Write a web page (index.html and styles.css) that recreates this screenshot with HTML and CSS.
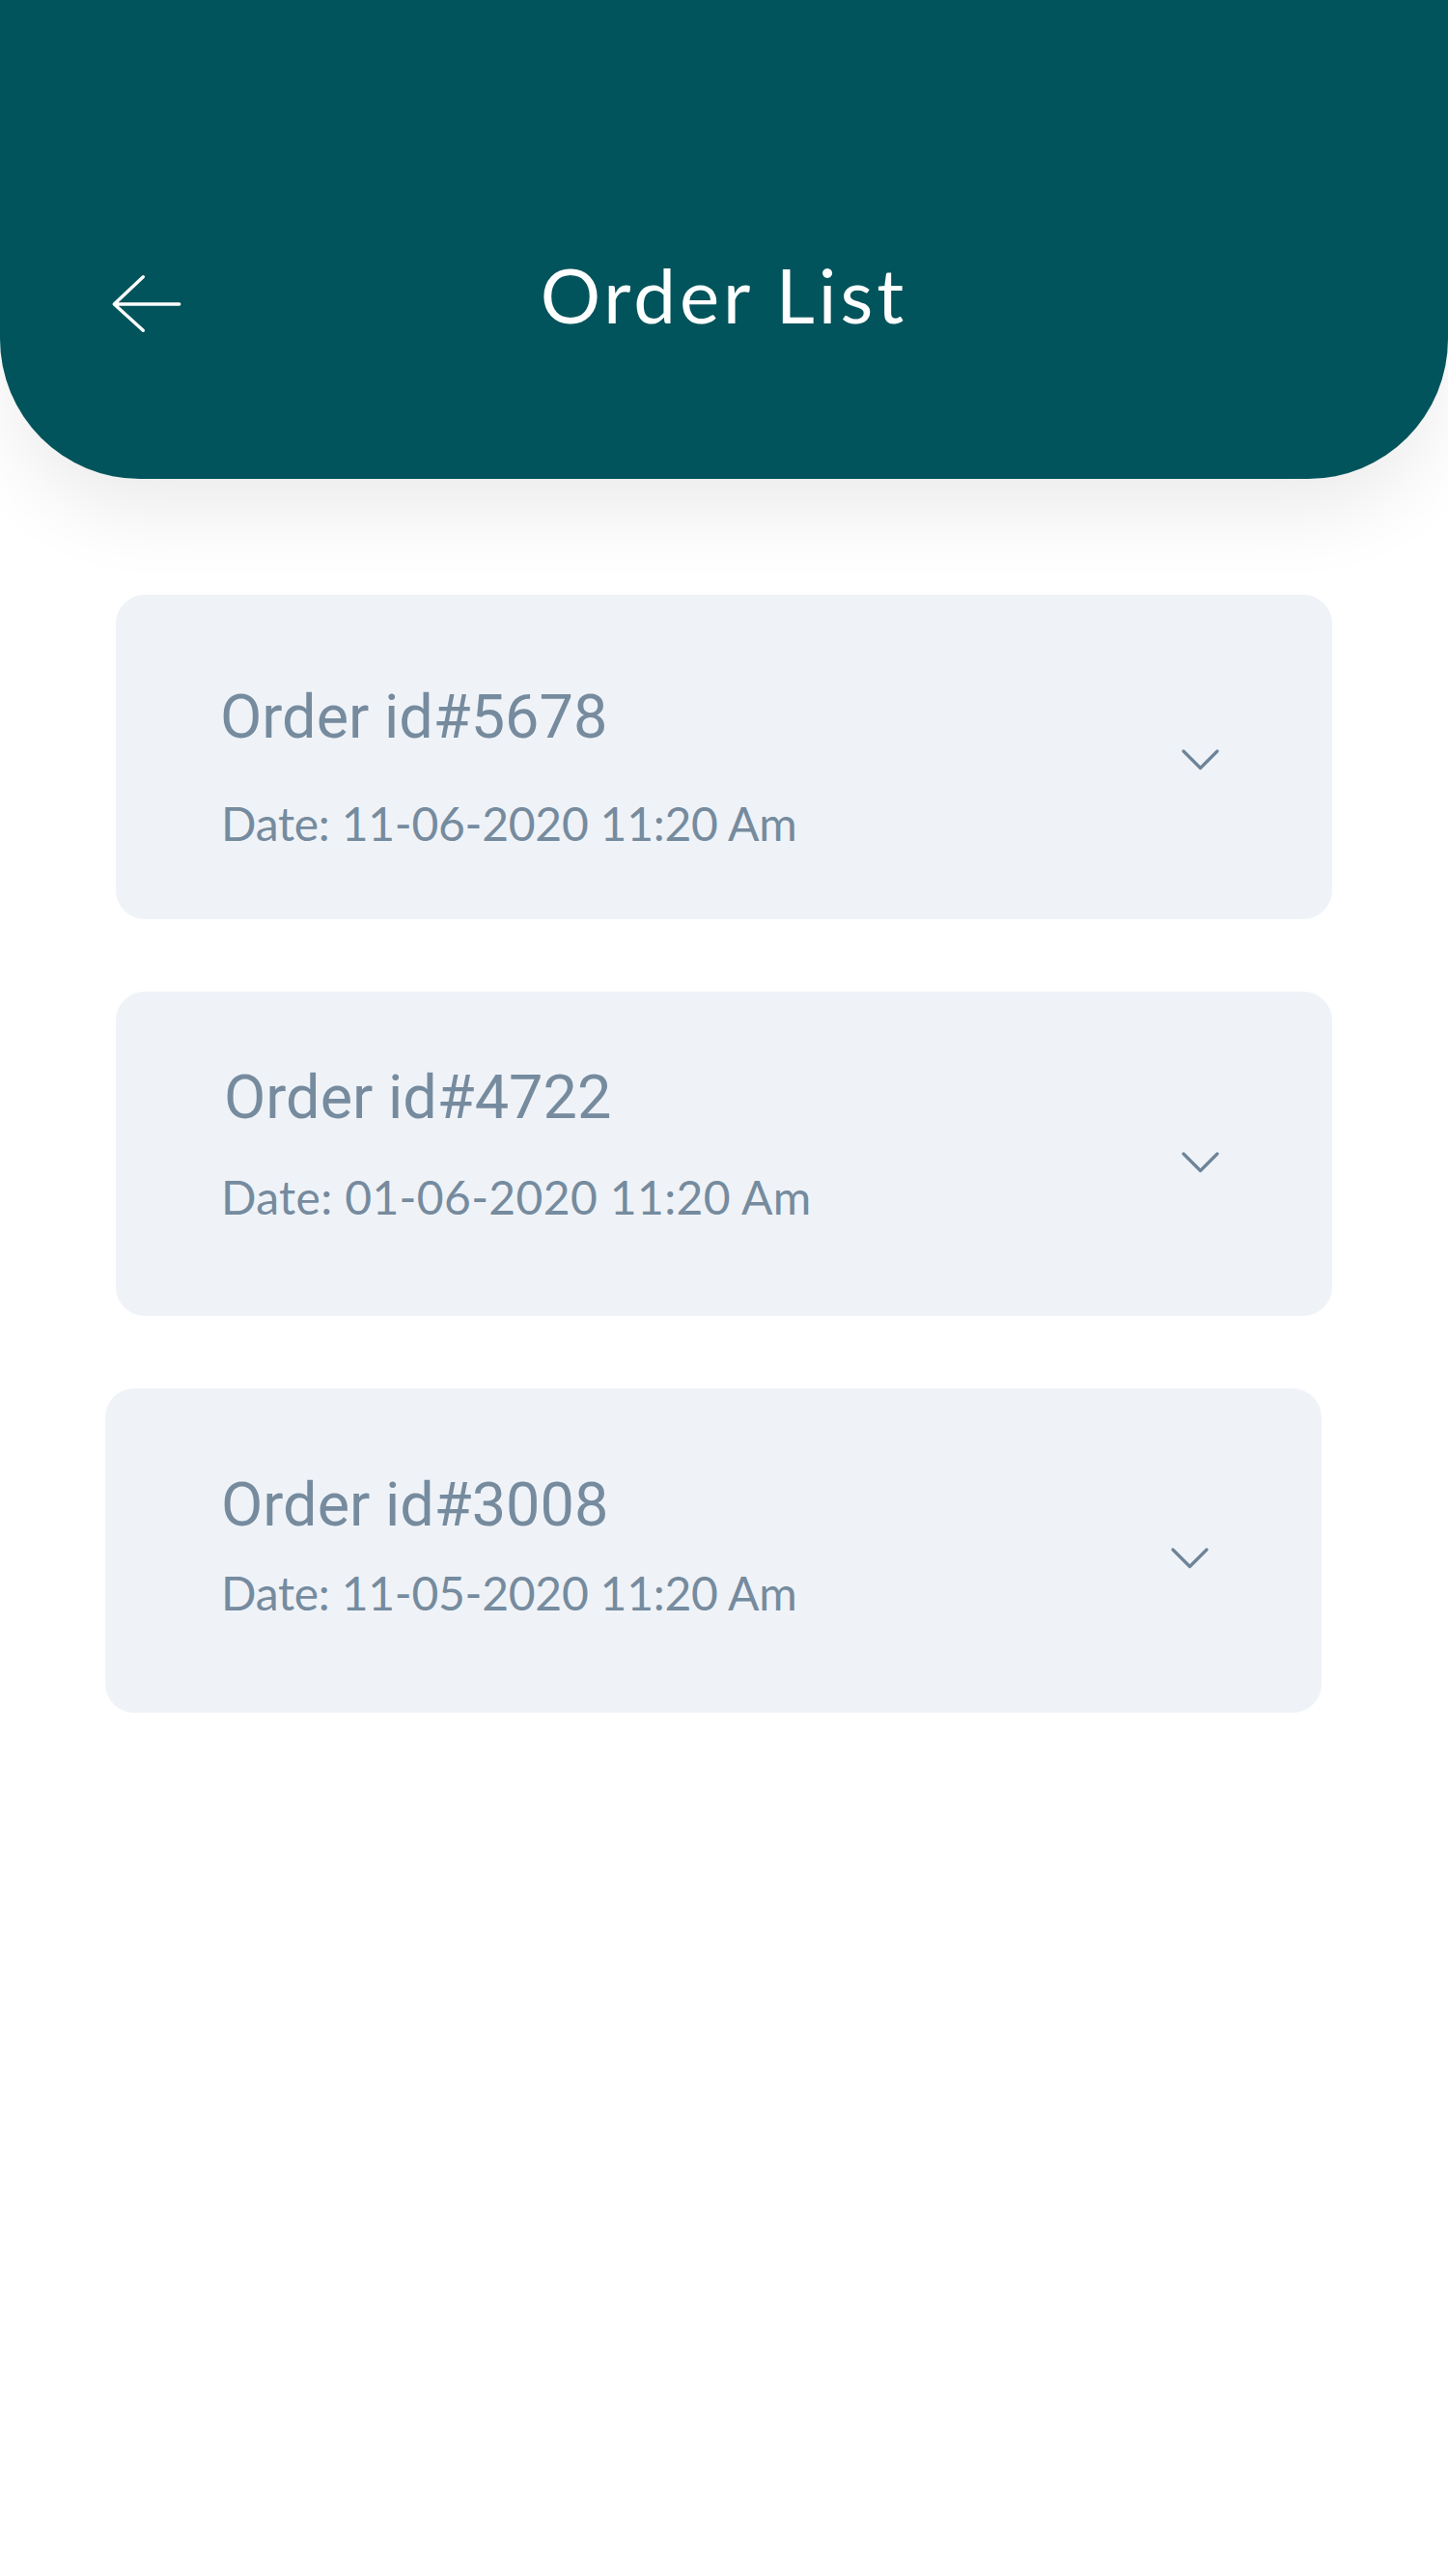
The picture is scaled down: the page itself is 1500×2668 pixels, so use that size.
FILE: index.html
```html
<!DOCTYPE html>
<html lang="en">
<head>
<meta charset="utf-8">
<title>Order List</title>
<link rel="stylesheet" href="styles.css">
</head>
<body>
  <header class="topbar">
    <div class="topbar-row">
      <button class="back" aria-label="Back">
        <svg class="back-icon" width="100" height="90" viewBox="0 0 100 90">
          <path d="M48.3 16.7 L18.3 45 L48.3 72.3 M18.3 45 L85.7 45" fill="none" stroke="#ffffff" stroke-width="3.4" stroke-linecap="round" stroke-linejoin="round"/>
        </svg>
      </button>
      <h1 class="title">Order List</h1>
      <div class="spacer"></div>
    </div>
  </header>

  <main class="orders">
    <section class="card card-a">
      <div class="card-text">
        <div class="order-id">Order id#5678</div>
        <div class="order-date">Date: 11-06-2020 11:20 Am</div>
      </div>
      <svg class="chevron" width="39" height="22" viewBox="0 0 39 22">
        <path d="M2 2 L19.5 19.5 L37 2" fill="none" stroke="#6e8498" stroke-width="3.2" stroke-linecap="round" stroke-linejoin="round"/>
      </svg>
    </section>

    <section class="card card-b">
      <div class="card-text">
        <div class="order-id">Order id#4722</div>
        <div class="order-date">Date: 01-06-2020 11:20 Am</div>
      </div>
      <svg class="chevron" width="39" height="22" viewBox="0 0 39 22">
        <path d="M2 2 L19.5 19.5 L37 2" fill="none" stroke="#6e8498" stroke-width="3.2" stroke-linecap="round" stroke-linejoin="round"/>
      </svg>
    </section>

    <section class="card card-c">
      <div class="card-text">
        <div class="order-id">Order id#3008</div>
        <div class="order-date">Date: 11-05-2020 11:20 Am</div>
      </div>
      <svg class="chevron" width="39" height="22" viewBox="0 0 39 22">
        <path d="M2 2 L19.5 19.5 L37 2" fill="none" stroke="#6e8498" stroke-width="3.2" stroke-linecap="round" stroke-linejoin="round"/>
      </svg>
    </section>
  </main>
</body>
</html>
```

FILE: styles.css
```css
* {
  box-sizing: border-box;
}

html, body {
  margin: 0;
  padding: 0;
  background: #ffffff;
}

body {
  width: 1500px;
  min-height: 2668px;
  font-family: "Lato", "Noto Sans", sans-serif;
}

.topbar {
  height: 496px;
  background: #01545b;
  border-radius: 0 0 145px 145px;
  box-shadow: 0 45px 80px -10px rgba(0, 0, 0, 0.08);
  padding: 266px 100px 0 100px;
}

.topbar-row {
  display: grid;
  grid-template-columns: 1fr auto 1fr;
  align-items: start;
  height: 78px;
}

.back {
  justify-self: start;
  margin: 4px 0 0 0;
  padding: 0;
  border: 0;
  background: none;
  width: 100px;
  height: 90px;
  display: block;
}

.back-icon {
  display: block;
}

.title {
  margin: 0;
  font-family: "Lato", sans-serif;
  font-weight: 400;
  font-size: 78px;
  line-height: 78px;
  letter-spacing: 4px;
  color: #ffffff;
  white-space: nowrap;
}

.orders {
  display: flex;
  flex-direction: column;
  gap: 75px;
  padding-top: 120px;
}

.card {
  width: 1260px;
  height: 336px;
  background: #eff3f8;
  border-radius: 30px;
  display: flex;
  align-items: flex-start;
}

.card-a {
  margin-left: 120px;
  padding-left: 108px;
  padding-top: 95px;
}

.card-b {
  margin-left: 120px;
  padding-left: 112px;
  padding-top: 78px;
}

.card-c {
  margin-left: 109px;
  padding-left: 120px;
  padding-top: 89px;
}

.card-text {
  flex: 1;
}

.order-id {
  font-family: "Roboto", sans-serif;
  font-weight: 400;
  font-size: 63px;
  line-height: 64px;
  color: #768b9e;
  white-space: nowrap;
}

.order-date {
  font-family: "Lato", sans-serif;
  font-weight: 400;
  font-size: 48px;
  line-height: 48px;
  letter-spacing: -0.25px;
  color: #768b9e;
  white-space: nowrap;
  margin-left: 1px;
}

.card-a .order-date {
  margin-top: 54px;
}

.card-b .order-date {
  margin-left: -3px;
  margin-top: 47px;
  letter-spacing: 0.35px;
}

.card-c .order-date {
  margin-left: 0;
  margin-top: 35px;
}

.chevron {
  display: block;
  flex: none;
  margin-right: 117px;
}

.card-a .chevron {
  margin-top: 65px;
}

.card-b .chevron {
  margin-top: 88px;
}

.card-c .chevron {
  margin-top: 76px;
}
```
